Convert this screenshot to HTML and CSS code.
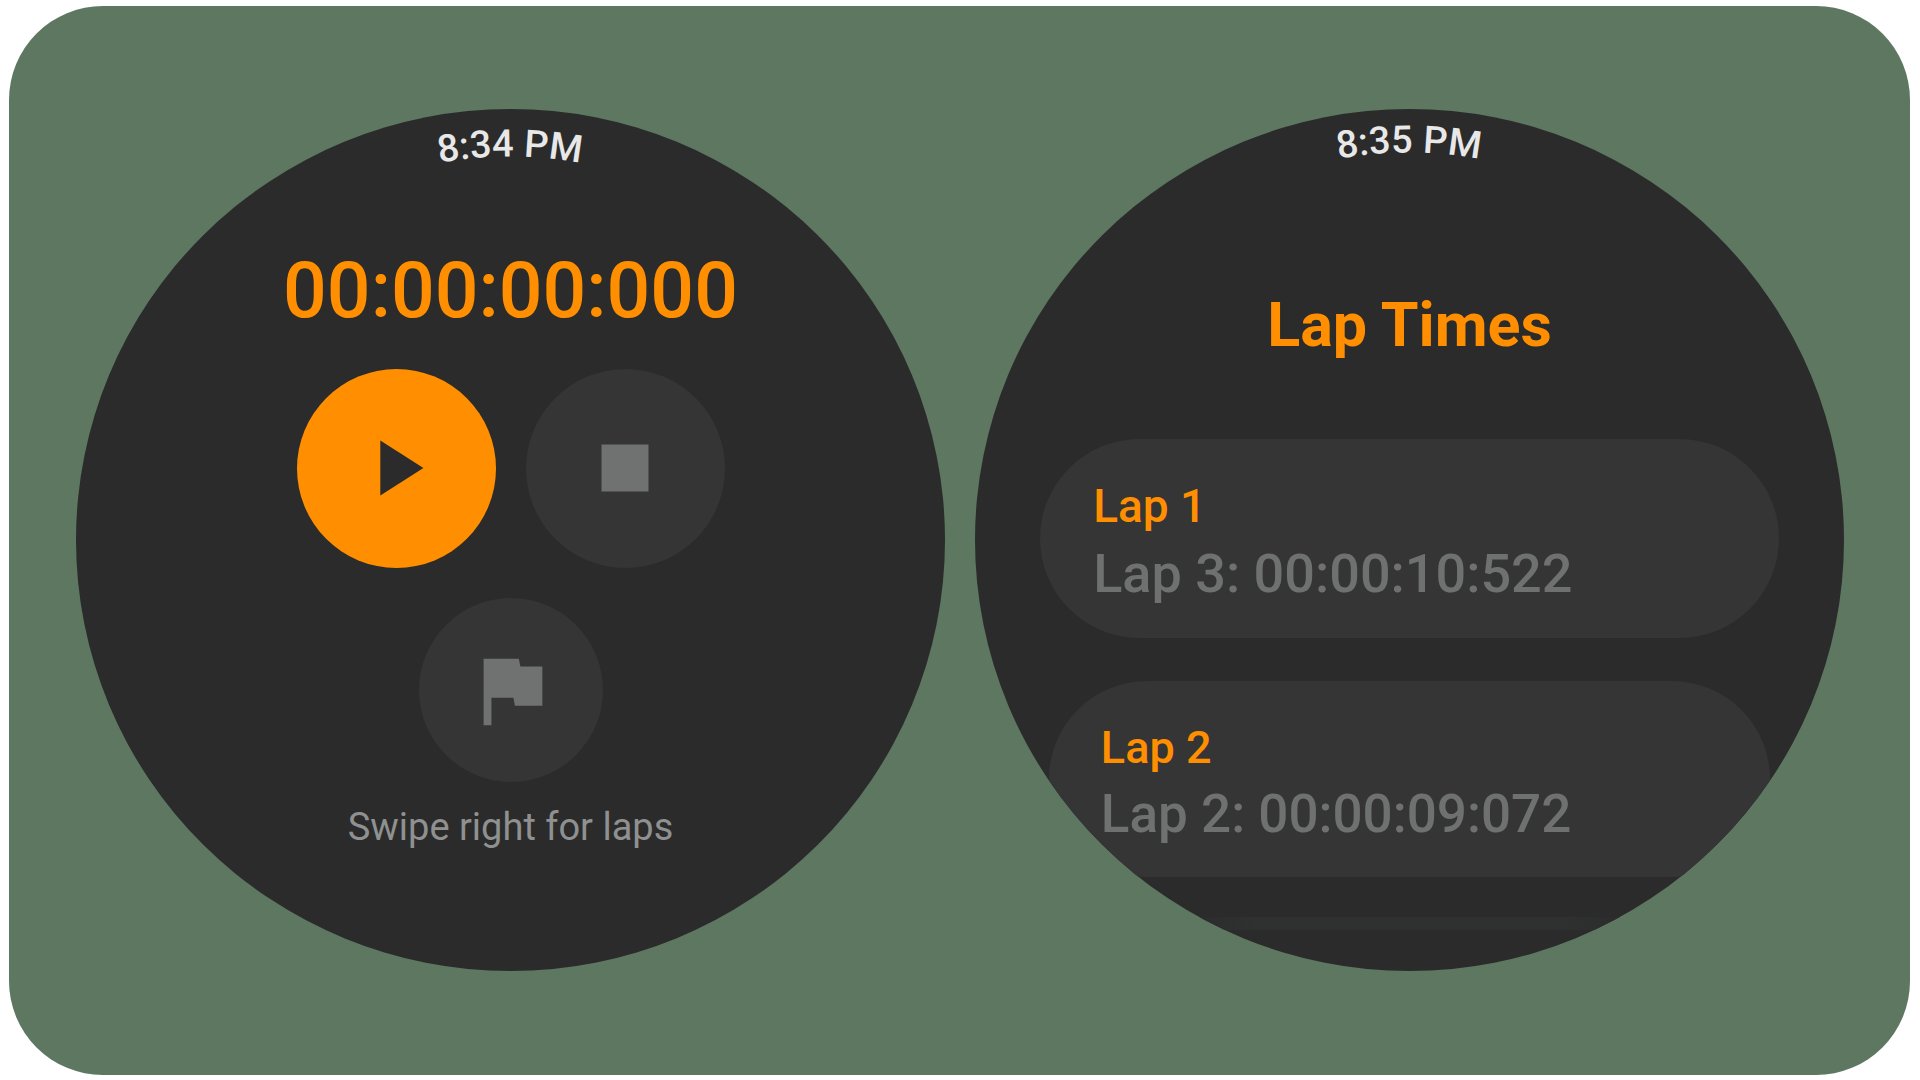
FILE: index.html
```html
<!DOCTYPE html>
<html lang="en">
<head>
    <meta charset="UTF-8">
    <meta name="viewport" content="width=device-width, initial-scale=1.0">
    <title>Stopwatch</title>
    <link rel="stylesheet" href="styles.css">
</head>
<body>
    <main class="panel">
        <section class="watch">
            <svg class="clock" viewBox="0 0 869 60">
                <path id="clockArc" d="M204 124A384 384 0 0 1 664 124" fill="none"/>
                <text text-anchor="middle"><textPath href="#clockArc" startOffset="50%">8:34 PM</textPath></text>
            </svg>
            <div class="timer">00:00:00:000</div>
            <div class="controls">
                <button class="control play" type="button" aria-label="Start">
                    <svg class="icon" viewBox="0 0 24 24"><path d="M8 5v14l11-7z"/></svg>
                </button>
                <button class="control" type="button" aria-label="Stop">
                    <svg class="icon" viewBox="0 0 24 24"><path d="M6 6h12v12H6z"/></svg>
                </button>
            </div>
            <button class="control lap-button" type="button" aria-label="Lap">
                <svg class="icon" viewBox="0 0 24 24"><path d="M14.4 6L14 4H5v17h2v-7h5.6l.4 2h7V6z"/></svg>
            </button>
            <p class="hint">Swipe right for laps</p>
        </section>

        <section class="watch">
            <svg class="clock" viewBox="0 0 869 60">
                <path id="clockArcLaps" d="M204 120A384 384 0 0 1 664 120" fill="none"/>
                <text text-anchor="middle"><textPath href="#clockArcLaps" startOffset="50%">8:35 PM</textPath></text>
            </svg>
            <h1 class="title">Lap Times</h1>
            <ol class="laps">
                <li class="lap">
                    <span class="lap-name">Lap 1</span>
                    <span class="lap-time">Lap 3: 00:00:10:522</span>
                </li>
                <li class="lap lap-small">
                    <span class="lap-name">Lap 2</span>
                    <span class="lap-time">Lap 2: 00:00:09:072</span>
                </li>
                <li class="lap-peek"></li>
            </ol>
        </section>
    </main>
</body>
</html>
```
FILE: styles.css
```css
* {
    box-sizing: border-box;
}
body {
    margin: 0;
    padding: 6px 10px 5px 9px;
    background: #fff;
    font-family: Roboto, sans-serif;
}
.panel {
    display: grid;
    grid-template-columns: 1fr 1fr;
    gap: 30px;
    align-items: center;
    min-height: calc(100vh - 11px);
    padding: 0 66px 2px 67px;
    border-radius: 94px;
    background: #5d7761;
}
.watch {
    display: flex;
    flex-direction: column;
    align-items: center;
    aspect-ratio: 869 / 862;
    border-radius: 50%;
    overflow: hidden;
    background: #2b2b2b;
}
.clock {
    display: block;
    width: 100%;
    overflow: visible;
    fill: #e8e8e8;
    font-size: 38px;
    font-weight: 500;
}

/* Stopwatch screen */
.timer {
    margin-top: 84px;
    color: #ff8f00;
    font-size: 77px;
    font-weight: 500;
    line-height: 76px;
}
.controls {
    display: flex;
    gap: 30px;
    margin: 40px 0 30px;
}
.control {
    display: flex;
    align-items: center;
    justify-content: center;
    width: 199px;
    height: 199px;
    padding: 0;
    border: none;
    border-radius: 50%;
    background: #353535;
    color: #6f7270;
}
.play {
    background: #ff8f00;
    color: #2b2b2b;
}
.lap-button {
    width: 184px;
    height: 184px;
}
.icon {
    width: 94px;
    height: 94px;
    fill: currentColor;
}
.hint {
    margin: 21px 0 0;
    color: #8f9190;
    font-size: 38px;
    line-height: 48px;
}

/* Lap list screen */
.title {
    margin: 124px 0 82px;
    color: #ff8f00;
    font-size: 61px;
    font-weight: 700;
    line-height: 64px;
}
.laps {
    display: flex;
    flex-direction: column;
    align-items: center;
    width: 100%;
    margin: 0;
    padding: 0;
    list-style: none;
}
.lap {
    display: flex;
    flex-direction: column;
    gap: 8px;
    width: 85%;
    margin-bottom: 43px;
    padding: 39px 53px 32px;
    border-radius: 100px;
    background: #353535;
}
.lap-name {
    color: #ff8f00;
    font-size: 46px;
    font-weight: 500;
    line-height: 56px;
}
.lap-time {
    color: #6f7170;
    font-size: 54px;
    font-weight: 500;
    line-height: 64px;
}
.lap-small {
    gap: 6px;
    width: 83%;
    margin-bottom: 40px;
    padding: 39px 52px 31px;
}
.lap-small .lap-name {
    font-size: 45px;
}
.lap-small .lap-time {
    font-size: 53px;
}
.lap-peek {
    width: 50%;
    height: 13px;
    background: linear-gradient(to right, #2b2b2b, #2f3130 15%, #2f3130 85%, #2b2b2b);
}
```
